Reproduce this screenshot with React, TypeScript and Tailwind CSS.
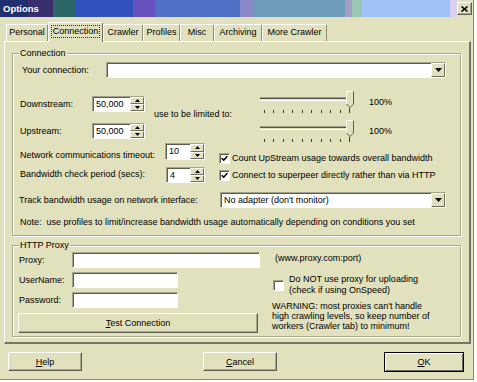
import React from 'react';

// classic win32 bevels
const raised = 'border border-t-white border-l-white border-r-[#6f6e62] border-b-[#6f6e62]';
const sunken = 'border border-t-[#a3a28d] border-l-[#a3a28d] border-r-white border-b-white shadow-[inset_1px_1px_0_#5d5c50]';
const button = 'border border-t-white border-l-white border-r-[#5f5e53] border-b-[#5f5e53] shadow-[inset_-1px_-1px_0_#a9a893]';

const Spinner = ({ value, className }: { value: string; className: string }) => (
    <div className={`flex bg-white ${sunken} ${className}`}>
        <span className="flex-1 pl-[3px] leading-[14px]">{value}</span>
        <div className="flex w-[14px] flex-col">
            <div className={`flex flex-1 items-center justify-center bg-[#e2e1bd] ${raised}`}>
                <svg width="5" height="3" className="block"><path d="M0 3h5L2.5 0z" fill="#000" /></svg>
            </div>
            <div className={`flex flex-1 items-center justify-center bg-[#e2e1bd] ${raised}`}>
                <svg width="5" height="3" className="block"><path d="M0 0h5L2.5 3z" fill="#000" /></svg>
            </div>
        </div>
    </div>
);

const Combo = ({ value, className }: { value?: string; className: string }) => (
    <div className={`flex h-[16px] bg-white ${sunken} ${className}`}>
        <span className="flex-1 pl-[3px] leading-[14px]">{value}</span>
        <div className={`flex w-[14px] items-center justify-center bg-[#e2e1bd] ${raised}`}>
            <svg width="7" height="4" className="block"><path d="M0 0h7L3.5 4z" fill="#000" /></svg>
        </div>
    </div>
);

const Check = ({ checked }: { checked?: boolean }) => (
    <div className={`flex h-[11px] w-[11px] shrink-0 items-center justify-center bg-white ${sunken}`}>
        {checked && (
            <svg width="7" height="7" viewBox="0 0 7 7" className="block">
                <path d="M0.7 3.2l2 2 3.6-4" stroke="#000" strokeWidth="1.6" fill="none" />
            </svg>
        )}
    </div>
);

const Slider = () => (
    <svg width="96" height="23" className="block shrink-0">
        <line x1="0" y1="6.5" x2="90" y2="6.5" stroke="#a09f8a" />
        <line x1="0" y1="7.5" x2="90" y2="7.5" stroke="#55544a" />
        <line x1="0" y1="9.5" x2="90" y2="9.5" stroke="#ffffff" />
        {Array.from({ length: 10 }).map((_, i) => {
            const x = Math.round(4 + i * 9.44) + 0.5;
            return <line key={i} x1={x} y1={i === 9 ? 17 : 19} x2={x} y2="22" stroke="#3d3c35" />;
        })}
        <polygon points="86,0 94,0 94,13 90,17 86,13" fill="#e2e1bd" />
        <polyline points="86.5,13 86.5,0.5 93.5,0.5" fill="none" stroke="#ffffff" />
        <polyline points="93.5,0.5 93.5,13 90,16.5 86.5,13" fill="none" stroke="#5f5e53" />
    </svg>
);

const Group = ({ title, className, children }: { title: string; className: string; children: React.ReactNode }) => (
    <div className={`relative border border-[#a9a893] shadow-[inset_1px_1px_0_#fff,1px_1px_0_#fff] ${className}`}>
        <span className="absolute left-[6px] top-[-7px] bg-[#e2e1bd] px-[1px] leading-[12px]">{title}</span>
        {children}
    </div>
);

const tab = 'flex h-[17px] items-center justify-center rounded-t-[2px] border-t border-l border-r border-t-white border-l-white border-r-[#8d8c7a]';

export default function App() {
    return (
        <div className="flex h-[382px] w-[477px] bg-white font-['Liberation_Sans',Arial,sans-serif] text-[9px] text-black">
            <div className="flex h-[380px] w-[474px] flex-col border-r border-b border-[#8a897a] bg-[#e2e1bd]">
                {/* title bar */}
                <div className="flex h-[17px] items-center bg-[linear-gradient(90deg,#20306e_0px,#20306e_28px,#392f6f_28px,#392f6f_53px,#2c6668_53px,#2c6668_76px,#3152bf_76px,#3152bf_133px,#6651bf_133px,#6651bf_155px,#4f72c6_155px,#4f72c6_240px,#8a87c9_240px,#8a87c9_254px,#6f9bbb_254px,#6f9bbb_345px,#a29fc2_345px,#a29fc2_352px,#99c7b6_352px,#99c7b6_362px,#a1c2f7_362px,#a1c2f7_450px,#d9d1f1_450px,#d9d1f1_457px,#e2e1bd_457px)] pl-[3px] pr-[1px]">
                    <span className="flex-1 text-[9.5px] font-bold leading-[12px] text-white">Options</span>
                    <div className={`flex h-[13px] w-[15px] items-center justify-center bg-[#e2e1bd] ${button}`}>
                        <svg width="7" height="6" viewBox="0 0 7 6" className="block">
                            <path d="M0.5 0.5l6 5M6.5 0.5l-6 5" stroke="#000" strokeWidth="1.6" />
                        </svg>
                    </div>
                </div>

                {/* tabs */}
                <div className="mt-[5px] flex h-[19px] items-end pl-[6px]">
                    <div className={`${tab} w-[42px]`}>Personal</div>
                    <div className="relative z-10 mb-[-1px] flex h-[20px] w-[55px] items-start justify-center rounded-t-[2px] border-t border-l border-r border-t-white border-l-white border-r-[#6f6e62] bg-[#e2e1bd] pt-[2px]">
                        <span className="border border-dotted border-[#333] px-[1px] leading-[11px]">Connection</span>
                    </div>
                    <div className={`${tab} w-[40px]`}>Crawler</div>
                    <div className={`${tab} w-[37px]`}>Profiles</div>
                    <div className={`${tab} w-[34px]`}>Misc</div>
                    <div className={`${tab} w-[48px]`}>Archiving</div>
                    <div className={`${tab} w-[65px]`}>More Crawler</div>
                </div>

                {/* tab panel */}
                <div className="ml-[4px] h-[303px] w-[467px] border-t border-l border-r-2 border-b-2 border-t-white border-l-white border-r-[#75746a] border-b-[#75746a] pl-[7px] pt-[11px]">
                    <Group title="Connection" className="h-[183px] w-[449px] pl-[7px] pt-[8px]">
                        <div className="flex h-[16px] items-center">
                            <span className="ml-[2px] w-[84px] leading-[12px]">Your connection:</span>
                            <Combo className="w-[340px]" />
                        </div>

                        <div className="mt-[13px] flex h-[52px]">
                            <div className="w-[125px]">
                                <div className="mt-[5px] flex h-[16px] items-center">
                                    <span className="w-[72px] leading-[12px]">Downstream:</span>
                                    <Spinner value="50,000" className="h-[16px] w-[53px]" />
                                </div>
                                <div className="mt-[11px] flex h-[16px] items-center">
                                    <span className="w-[72px] leading-[12px]">Upstream:</span>
                                    <Spinner value="50,000" className="h-[16px] w-[53px]" />
                                </div>
                            </div>
                            <span className="ml-[9px] mt-[17px] w-[106px] self-start leading-[12px]">use to be limited to:</span>
                            <div className="flex flex-col">
                                <div className="flex h-[33px] items-start">
                                    <Slider />
                                    <span className="ml-[13px] mt-[5px] leading-[12px]">100%</span>
                                </div>
                                <div className="flex h-[23px] items-start">
                                    <Slider />
                                    <span className="ml-[13px] mt-[5px] leading-[12px]">100%</span>
                                </div>
                            </div>
                        </div>

                        <div className="flex h-[17px] items-start">
                            <span className="mt-[6px] w-[145px] leading-[12px]">Network communications timeout:</span>
                            <Spinner value="10" className="h-[17px] w-[40px]" />
                            <div className="ml-[14px] mt-[9px] flex h-[12px] items-center">
                                <Check checked />
                                <span className="ml-[2px] leading-[12px]">Count UpStream usage towards overall bandwidth</span>
                            </div>
                        </div>
                        <div className="mt-[7px] flex h-[16px] items-start">
                            <span className="mt-[1px] w-[146px] leading-[12px]">Bandwidth check period (secs):</span>
                            <Spinner value="4" className="h-[16px] w-[39px]" />
                            <div className="ml-[14px] mt-[2px] flex h-[12px] items-center">
                                <Check checked />
                                <span className="ml-[2px] leading-[12px]">Connect to superpeer directly rather than via HTTP</span>
                            </div>
                        </div>

                        <div className="mt-[9px] flex h-[16px] items-center">
                            <span className="ml-[-1px] w-[201px] leading-[12px]">Track bandwidth usage on network interface:</span>
                            <Combo value="No adapter (don't monitor)" className="w-[226px]" />
                        </div>
                        <div className="mt-[8px] leading-[12px]">
                            Note:&nbsp; use profiles to limit/increase bandwidth usage automatically depending on conditions you set
                        </div>
                    </Group>

                    <Group title="HTTP Proxy" className="mt-[9px] flex h-[92px] w-[449px] pl-[5px] pt-[6px]">
                        <div className="flex w-[242px] flex-col">
                            <div className="flex h-[16px] items-center">
                                <span className="ml-[1px] w-[53px] leading-[12px]">Proxy:</span>
                                <div className={`h-[16px] w-[188px] bg-white ${sunken}`} />
                            </div>
                            <div className="mt-[4px] flex h-[16px] items-center">
                                <span className="ml-[1px] w-[53px] leading-[12px]">UserName:</span>
                                <div className={`h-[16px] w-[106px] bg-white ${sunken}`} />
                            </div>
                            <div className="mt-[4px] flex h-[16px] items-center">
                                <span className="ml-[1px] w-[53px] leading-[12px]">Password:</span>
                                <div className={`h-[16px] w-[106px] bg-white ${sunken}`} />
                            </div>
                            <div className={`mt-[5px] flex h-[20px] w-[240px] items-center justify-center ${button}`}>
                                <span className="leading-[12px]"><span className="underline">T</span>est Connection</span>
                            </div>
                        </div>
                        <div className="ml-[12px] flex flex-col">
                            <span className="ml-[3px] leading-[12px]">(www.proxy.com:port)</span>
                            <div className="mt-[10px] flex items-center">
                                <div className="ml-[1px]"><Check /></div>
                                <span className="ml-[5px] leading-[11px]">Do NOT use proxy for uploading<br />(check if using OnSpeed)</span>
                            </div>
                            <span className="mt-[5px] leading-[10px]">
                                WARNING: most proxies can't handle<br />high crawling levels, so keep number of<br />workers (Crawler tab) to minimum!
                            </span>
                        </div>
                    </Group>
                </div>

                {/* dialog buttons */}
                <div className="mt-[8px] flex h-[19px] items-start">
                    <div className={`ml-[8px] flex h-[19px] w-[74px] items-center justify-center ${button}`}>
                        <span className="leading-[12px]"><span className="underline">H</span>elp</span>
                    </div>
                    <div className={`ml-[121px] flex h-[19px] w-[74px] items-center justify-center ${button}`}>
                        <span className="leading-[12px]"><span className="underline">C</span>ancel</span>
                    </div>
                    <div className="ml-[107px] flex h-[20px] w-[80px] items-center justify-center border border-black shadow-[inset_1px_1px_0_#fff,inset_-1px_-1px_0_#6b6a5e]">
                        <span className="leading-[12px]"><span className="underline">O</span>K</span>
                    </div>
                </div>
            </div>
        </div>
    );
}
